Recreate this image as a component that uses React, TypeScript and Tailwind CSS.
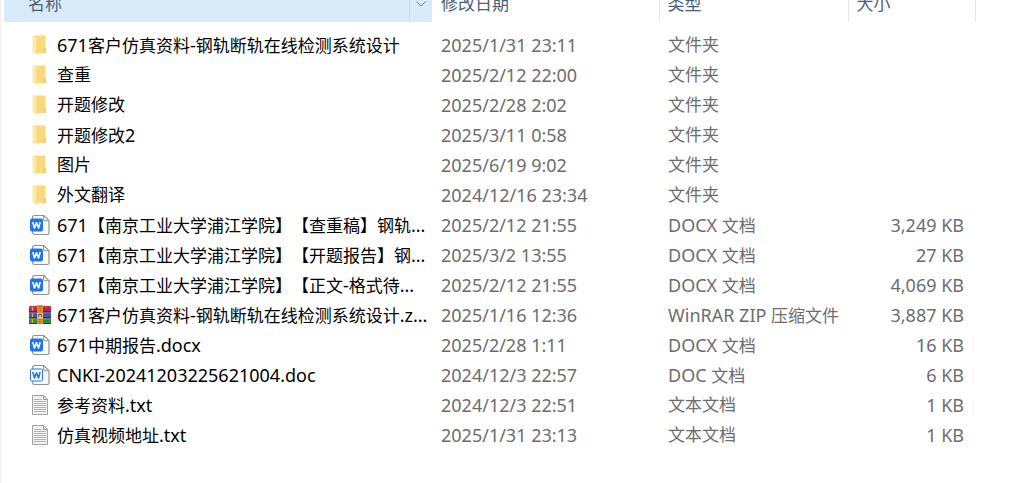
import React from "react";

type Kind = "folder" | "docx" | "doc" | "zip" | "txt";

type FileRow = {
  kind: Kind;
  name: string;
  date: string;
  type: string;
  size?: string;
};

const files: FileRow[] = [
  { kind: "folder", name: "671客户仿真资料-钢轨断轨在线检测系统设计", date: "2025/1/31 23:11", type: "文件夹" },
  { kind: "folder", name: "查重", date: "2025/2/12 22:00", type: "文件夹" },
  { kind: "folder", name: "开题修改", date: "2025/2/28 2:02", type: "文件夹" },
  { kind: "folder", name: "开题修改2", date: "2025/3/11 0:58", type: "文件夹" },
  { kind: "folder", name: "图片", date: "2025/6/19 9:02", type: "文件夹" },
  { kind: "folder", name: "外文翻译", date: "2024/12/16 23:34", type: "文件夹" },
  { kind: "docx", name: "671【南京工业大学浦江学院】【查重稿】钢轨...", date: "2025/2/12 21:55", type: "DOCX 文档", size: "3,249 KB" },
  { kind: "docx", name: "671【南京工业大学浦江学院】【开题报告】钢...", date: "2025/3/2 13:55", type: "DOCX 文档", size: "27 KB" },
  { kind: "docx", name: "671【南京工业大学浦江学院】【正文-格式待...", date: "2025/2/12 21:55", type: "DOCX 文档", size: "4,069 KB" },
  { kind: "zip", name: "671客户仿真资料-钢轨断轨在线检测系统设计.z...", date: "2025/1/16 12:36", type: "WinRAR ZIP 压缩文件", size: "3,887 KB" },
  { kind: "docx", name: "671中期报告.docx", date: "2025/2/28 1:11", type: "DOCX 文档", size: "16 KB" },
  { kind: "doc", name: "CNKI-20241203225621004.doc", date: "2024/12/3 22:57", type: "DOC 文档", size: "6 KB" },
  { kind: "txt", name: "参考资料.txt", date: "2024/12/3 22:51", type: "文本文档", size: "1 KB" },
  { kind: "txt", name: "仿真视频地址.txt", date: "2025/1/31 23:13", type: "文本文档", size: "1 KB" },
];

const FolderIcon = () => (
  <svg width="22" height="22" viewBox="0 0 22 22">
    <path d="M5 1.500h11.500V14h.5v5H5z" fill="#f8d97c" />
    <path d="M14.500 14h2.500v5h-2.500z" fill="#f4cf6c" />
    <path d="M3.500 1.500H5.500L8 4v17l-4.500-2.500z" fill="#ffe9a8" />
    <path d="M8 4v16" stroke="#f3cf74" strokeWidth=".6" />
  </svg>
);

const WordIcon = ({ filled }: { filled: boolean }) => (
  <svg width="22" height="22" viewBox="0 0 22 22">
    <path
      d="M3.7 5V3.2c0-1 .7-1.7 1.7-1.7h9.4l5.2 5.2v12.1c0 1-.7 1.7-1.7 1.7H5.4c-1 0-1.7-.7-1.7-1.7V17"
      fill="#fff"
      stroke="#8f9296"
      strokeWidth="1.2"
    />
    <path d="M14.6 1.7v3.6c0 .9.6 1.5 1.5 1.5h3.7" fill="none" stroke="#8f9296" strokeWidth="1.1" />
    <rect x="1.5" y="5" width="12" height="12" rx="1.2" fill={filled ? "#2272f4" : "#fff"} stroke="#2272f4" />
    <path
      d="M3.8 8l1.7 6 2-5.2 2 5.2 1.7-6"
      fill="none"
      stroke={filled ? "#fff" : "#2272f4"}
      strokeWidth="1.6"
      strokeLinejoin="round"
    />
  </svg>
);

const ZipIcon = () => (
  <svg width="22" height="22" viewBox="0 0 22 22">
    <rect y="2" width="22" height="6" rx="1" fill="#b92348" />
    <rect y="8" width="22" height="6" fill="#5648b0" />
    <rect y="14" width="22" height="6" rx="1" fill="#2f8a3c" />
    <path d="M0 3h22" stroke="#d3446c" />
    <path d="M0 9h22" stroke="#7468cc" />
    <path d="M0 15h22" stroke="#4ba552" />
    <path d="M0 7.5h22M0 13.5h22M0 19.5h22" stroke="#33243c" strokeOpacity=".7" />
    <path d="M3.5 3v17" stroke="#e2a43c" strokeWidth="1.5" strokeDasharray="4 2" />
    <rect x="8" y="1" width="6" height="19" fill="#e08f1e" />
    <path d="M11 2v6M11 15v5" stroke="#a8620f" strokeWidth="1.5" strokeDasharray="1 1" />
    <rect x="8" y="9" width="6" height="5.5" rx="1" fill="#cfc6b8" />
    <path d="M9.5 13v-2.500h3V13" fill="none" stroke="#6d5a48" />
  </svg>
);

const TextIcon = () => (
  <svg width="22" height="22" viewBox="0 0 22 22">
    <path d="M3.500 1.500h11l4 4v15h-15z" fill="#f1f1f1" stroke="#a3a3a3" />
    <path d="M14.500 1.500v4h4z" fill="#fff" stroke="#969696" />
    <path
      d="M5 5.500h8M5 7.500h12M5 9.500h12M5 11.500h12M5 13.500h12M5 15.500h12M5 17.500h12"
      stroke="#b4b4b4"
    />
  </svg>
);

const Icon = ({ kind }: { kind: Kind }) => {
  if (kind === "folder") return <FolderIcon />;
  if (kind === "zip") return <ZipIcon />;
  if (kind === "txt") return <TextIcon />;
  return <WordIcon filled={kind === "docx"} />;
};

// Latin runs are set one pixel larger than the Chinese around them
const Mixed = ({ text }: { text: string }) => (
  <>
    {text.split(/([\x20-\x7e]+)/).map((part, i) =>
      i % 2 ? (
        <span key={i} className="text-[18px]">
          {part}
        </span>
      ) : (
        part
      )
    )}
  </>
);

const App = () => {
  return (
    <main className="min-h-screen overflow-hidden border-l-2 border-[#f5f5f5] bg-white pl-0.5 font-['Noto_Sans','Noto_Sans_CJK_SC',sans-serif] text-[17px] leading-[30px] text-[#6d6d6d] [text-spacing-trim:space-all]">
      <table className="-mt-[14px] w-full table-fixed border-collapse whitespace-nowrap">
        <colgroup>
          <col className="w-[428px]" />
          <col className="w-[227px]" />
          <col className="w-[189px]" />
          <col className="w-[127px]" />
          <col />
        </colgroup>
        <thead>
          <tr className="h-9 text-left text-[#4c607a] [&>th]:p-0 [&>th]:font-normal">
            <th className="bg-[#d9ebf9]">
              <div className="flex h-9">
                <button className="flex-1 pl-6 text-left">名称</button>
                <button
                  aria-label="筛选"
                  className="flex w-[23px] items-center justify-center border-l border-[#c3d9ea]"
                >
                  <svg width="10" height="6" viewBox="0 0 10 6" fill="none" stroke="#6f7f8e">
                    <path d="M.5.5L5 5 9.500.5" />
                  </svg>
                </button>
              </div>
            </th>
            <th className="border-r border-[#e5e5e5]">
              <button className="w-full pl-[9px] text-left">修改日期</button>
            </th>
            <th className="border-r border-[#e5e5e5]">
              <button className="w-full pl-2 text-left">类型</button>
            </th>
            <th className="border-r border-[#e5e5e5]">
              <button className="w-full pl-2 text-left">大小</button>
            </th>
            <th></th>
          </tr>
        </thead>
        <tbody className="before:block before:h-2 before:content-['']">
          {files.map((file) => (
            <tr key={file.name} className="h-[30px] [&>td]:p-0">
              <td className="text-black">
                <div className="flex h-[30px] items-center gap-1.5 pl-[25px]">
                  <Icon kind={file.kind} />
                  <span>
                    <Mixed text={file.name} />
                  </span>
                </div>
              </td>
              <td>
                <div className="h-[30px] pl-[9px]">
                  <Mixed text={file.date} />
                </div>
              </td>
              <td>
                <div className="h-[30px] pl-[9px]">
                  <Mixed text={file.type} />
                </div>
              </td>
              <td>
                <div className="h-[30px] pr-[11px] text-right">
                  <Mixed text={file.size ?? ""} />
                </div>
              </td>
              <td></td>
            </tr>
          ))}
        </tbody>
      </table>
    </main>
  );
};

export default App;
